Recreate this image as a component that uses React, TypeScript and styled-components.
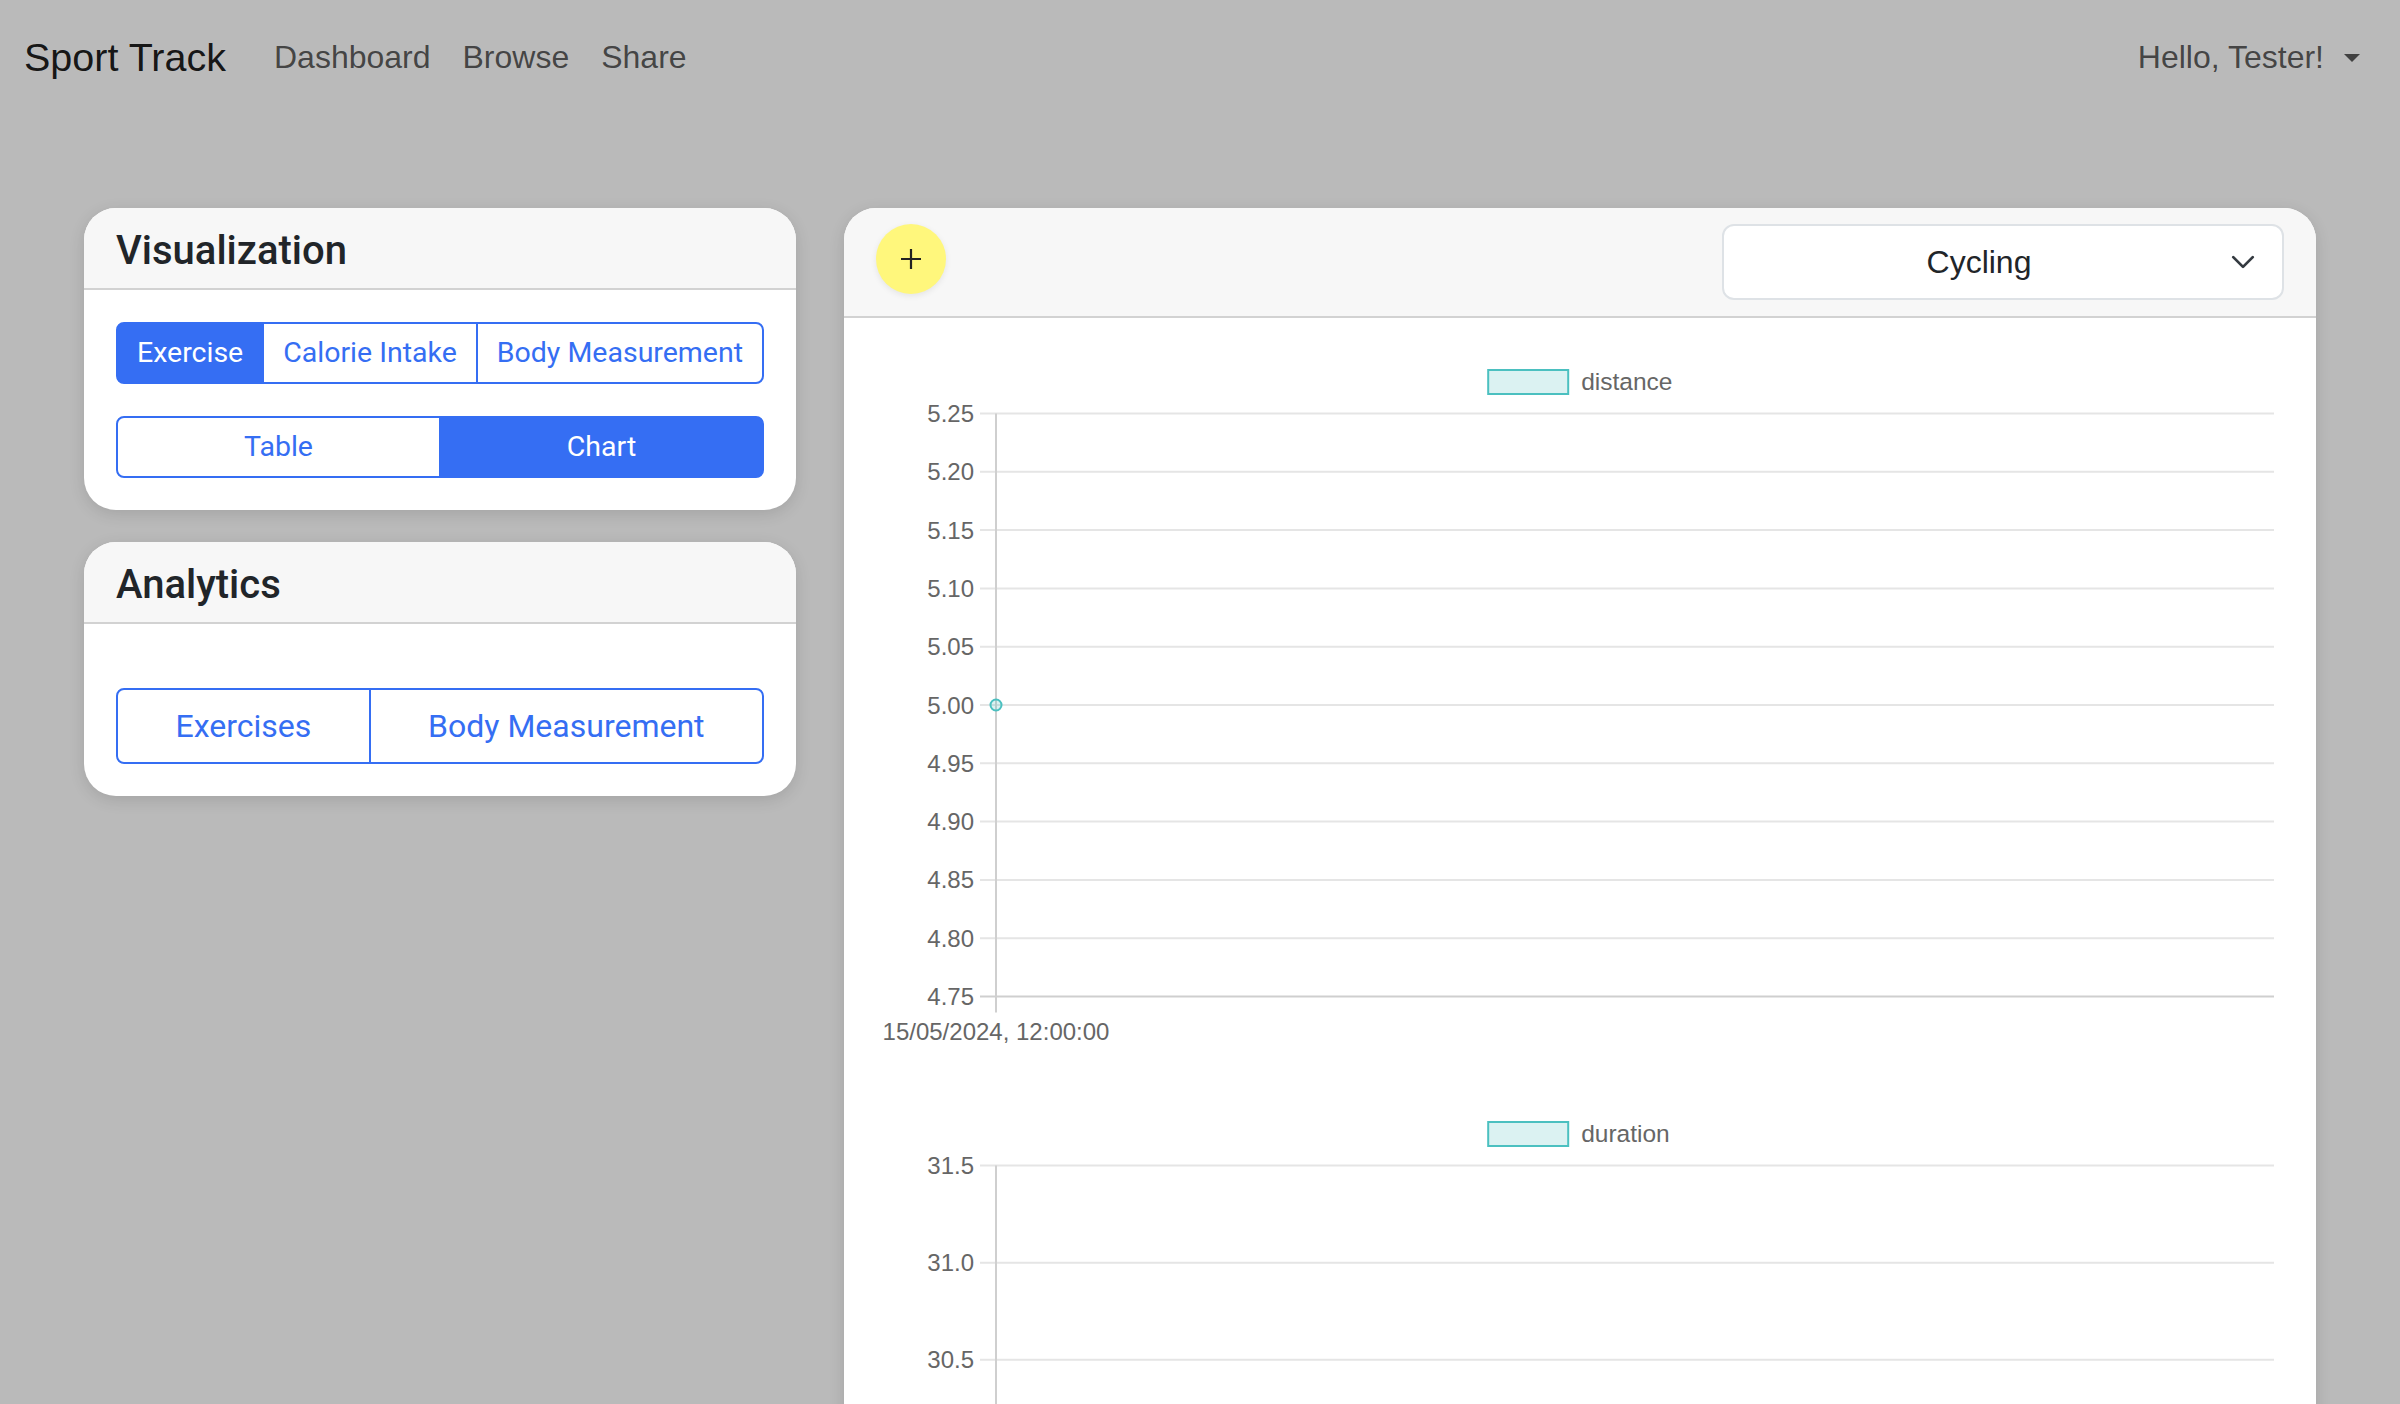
import React from "react";
import styled, { createGlobalStyle } from "styled-components";

const BLUE = "#356ef3";

const GlobalStyle = createGlobalStyle`
  *, *::before, *::after { box-sizing: border-box; }
  html, body {
    margin: 0;
    padding: 0;
    background: #bababa;
    overflow: hidden;
  }
  body {
    font-family: "Liberation Sans", Arial, Helvetica, sans-serif;
    color: #212529;
  }
`;

const Navbar = styled.nav`
  display: flex;
  align-items: center;
  height: 112px;
  padding: 1px 24px 0;
`;

const Brand = styled.a`
  font-size: 39.5px;
  line-height: 60px;
  color: rgba(0, 0, 0, 0.9);
  text-decoration: none;
  margin-right: 32px;
`;

const NavList = styled.div`
  display: flex;
  flex: 1;
  align-items: center;
`;

const NavLink = styled.a`
  font-size: 32px;
  line-height: 48px;
  padding: 0 16px;
  color: rgba(0, 0, 0, 0.65);
  text-decoration: none;
`;

const UserToggle = styled(NavLink)`
  display: flex;
  align-items: center;
  &::after {
    content: "";
    margin-left: 20px;
    margin-top: 2px;
    border-top: 8px solid currentColor;
    border-left: 8px solid transparent;
    border-right: 8px solid transparent;
  }
`;

const Container = styled.main`
  width: 2280px;
  margin: 96px auto 0;
  padding: 0 24px;
  display: grid;
  grid-template-columns: 712px 1fr;
  gap: 48px;
  align-items: start;
`;

const Column = styled.div`
  display: flex;
  flex-direction: column;
  gap: 32px;
`;

const Card = styled.section`
  background: #fff;
  border-radius: 32px;
  overflow: hidden;
  box-shadow: 0 4px 16px rgba(0, 0, 0, 0.12);
`;

const CardHeader = styled.header`
  display: flex;
  align-items: center;
  justify-content: space-between;
  padding: 16px 32px;
  background: #f7f7f7;
  border-bottom: 2px solid #d2d2d2;
`;

const CardTitle = styled.h5`
  margin: 0;
  padding: 3px 0 0;
  height: 48px;
  font-family: Roboto, "Liberation Sans", sans-serif;
  font-weight: 500;
  font-size: 40px;
  line-height: 48px;
  color: #212529;
`;

const CardBody = styled.div`
  padding: 32px;
`;

const BtnGroup = styled.div<{ $mt?: number }>`
  display: flex;
  width: 100%;
  margin-top: ${(p) => p.$mt ?? 0}px;
`;

const GroupButton = styled.button<{ $active?: boolean; $small?: boolean; $equal?: boolean }>`
  flex: ${(p) => (p.$equal ? "1 1 0" : "1 1 auto")};
  font-family: Roboto, "Liberation Sans", sans-serif;
  font-size: ${(p) => (p.$small ? 28.5 : 32)}px;
  line-height: ${(p) => (p.$small ? "42px" : "48px")};
  padding: ${(p) => (p.$small ? "8px 14px" : "12px 22px")};
  border: 2px solid ${BLUE};
  background: ${(p) => (p.$active ? BLUE : "#fff")};
  color: ${(p) => (p.$active ? "#fff" : BLUE)};
  border-radius: 0;
  white-space: nowrap;
  cursor: pointer;
  & + & {
    margin-left: -2px;
  }
  &:first-child {
    border-top-left-radius: 8px;
    border-bottom-left-radius: 8px;
  }
  &:last-child {
    border-top-right-radius: 8px;
    border-bottom-right-radius: 8px;
  }
`;

const AddButton = styled.button`
  width: 70px;
  height: 70px;
  margin-bottom: 6px;
  border-radius: 50%;
  border: none;
  background: #fff77c;
  box-shadow: 0 2px 6px rgba(0, 0, 0, 0.08);
  display: flex;
  align-items: center;
  justify-content: center;
  padding: 0;
  cursor: pointer;
`;

const SelectBox = styled.div`
  width: 562px;
  height: 76px;
  display: flex;
  align-items: center;
  padding: 0 26px 0 24px;
  background: #fff;
  border: 2px solid #dee2e6;
  border-radius: 12px;
  font-size: 32px;
  color: #212529;
`;

const SelectValue = styled.span`
  flex: 1;
  text-align: center;
`;

const Chevron = styled.svg`
  width: 26px;
  height: 26px;
  margin-left: 20px;
  flex: none;
`;

const ChartBox = styled.div<{ $mt?: number }>`
  width: 100%;
  height: 704px;
  margin-top: ${(p) => p.$mt ?? 0}px;
`;

type ChartSpec = {
  label: string;
  ticks: string[];
  pointIndex: number;
  xLabel: string;
};

const TEAL = "rgb(75,192,192)";
const TEAL_FILL = "rgba(75,192,192,0.2)";
const CHART_FONT = '"Liberation Sans", Arial, sans-serif';

function LineChart({ spec }: { spec: ChartSpec }) {
  const W = 1408;
  const top = 63.5;
  const bottom = 646.5;
  const axisX = 120;
  const right = 1398;
  const n = spec.ticks.length - 1;
  const step = (bottom - top) / n;
  const textW = spec.label.length * 12.2;
  const legendW = 80 + 12 + textW;
  const legendX = W / 2 - legendW / 2 + 3;
  return (
    <svg width="100%" height="704" viewBox="0 0 1408 704">
      <rect x={legendX} y={20} width={80} height={24} fill={TEAL_FILL} stroke={TEAL} strokeWidth={2} />
      <text x={legendX + 93} y={40} fontSize={24.5} fill="#666" fontFamily={CHART_FONT}>
        {spec.label}
      </text>
      {spec.ticks.map((t, i) => {
        const y = top + i * step;
        const isLast = i === n;
        return (
          <g key={t}>
            <line
              x1={104}
              x2={right}
              y1={y}
              y2={y}
              stroke={isLast ? "#cfcfcf" : "#e5e5e5"}
              strokeWidth={2}
            />
            <text x={98} y={y + 8.5} textAnchor="end" fontSize={24} fill="#666" fontFamily={CHART_FONT}>
              {t}
            </text>
          </g>
        );
      })}
      <line x1={axisX} x2={axisX} y1={top} y2={bottom + 16} stroke="#cfcfcf" strokeWidth={2} />
      <text x={axisX} y={690} textAnchor="middle" fontSize={24} fill="#666" fontFamily={CHART_FONT}>
        {spec.xLabel}
      </text>
      <circle
        cx={axisX}
        cy={top + spec.pointIndex * step}
        r={5.5}
        fill={TEAL_FILL}
        stroke={TEAL}
        strokeWidth={2}
      />
    </svg>
  );
}

const distance: ChartSpec = {
  label: "distance",
  ticks: ["5.25", "5.20", "5.15", "5.10", "5.05", "5.00", "4.95", "4.90", "4.85", "4.80", "4.75"],
  pointIndex: 5,
  xLabel: "15/05/2024, 12:00:00",
};

const duration: ChartSpec = {
  label: "duration",
  ticks: ["31.5", "31.0", "30.5", "30.0", "29.5", "29.0", "28.5"],
  pointIndex: 3,
  xLabel: "15/05/2024, 12:00:00",
};

export default function App() {
  return (
    <>
      <GlobalStyle />
      <Navbar>
        <Brand href="#">Sport Track</Brand>
        <NavList>
          <NavLink href="#">Dashboard</NavLink>
          <NavLink href="#">Browse</NavLink>
          <NavLink href="#">Share</NavLink>
        </NavList>
        <UserToggle href="#">Hello, Tester!</UserToggle>
      </Navbar>
      <Container>
        <Column>
          <Card>
            <CardHeader>
              <CardTitle>Visualization</CardTitle>
            </CardHeader>
            <CardBody>
              <BtnGroup>
                <GroupButton $small $active>Exercise</GroupButton>
                <GroupButton $small>Calorie Intake</GroupButton>
                <GroupButton $small>Body Measurement</GroupButton>
              </BtnGroup>
              <BtnGroup $mt={32}>
                <GroupButton $small $equal>Table</GroupButton>
                <GroupButton $small $equal $active>Chart</GroupButton>
              </BtnGroup>
            </CardBody>
          </Card>
          <Card>
            <CardHeader>
              <CardTitle>Analytics</CardTitle>
            </CardHeader>
            <CardBody>
              <BtnGroup $mt={32}>
                <GroupButton>Exercises</GroupButton>
                <GroupButton>Body Measurement</GroupButton>
              </BtnGroup>
            </CardBody>
          </Card>
        </Column>
        <Card>
          <CardHeader>
            <AddButton aria-label="Add">
              <svg width="22" height="22" viewBox="0 0 22 22">
                <path d="M11 1v20M1 11h20" stroke="#222" strokeWidth="2.2" />
              </svg>
            </AddButton>
            <SelectBox>
              <SelectValue>Cycling</SelectValue>
              <Chevron viewBox="0 0 16 16">
                <path
                  d="m2 5 6 6 6-6"
                  fill="none"
                  stroke="#343a40"
                  strokeWidth="1.7"
                  strokeLinecap="round"
                  strokeLinejoin="round"
                />
              </Chevron>
            </SelectBox>
          </CardHeader>
          <CardBody>
            <ChartBox>
              <LineChart spec={distance} />
            </ChartBox>
            <ChartBox $mt={48}>
              <LineChart spec={duration} />
            </ChartBox>
          </CardBody>
        </Card>
      </Container>
    </>
  );
}
